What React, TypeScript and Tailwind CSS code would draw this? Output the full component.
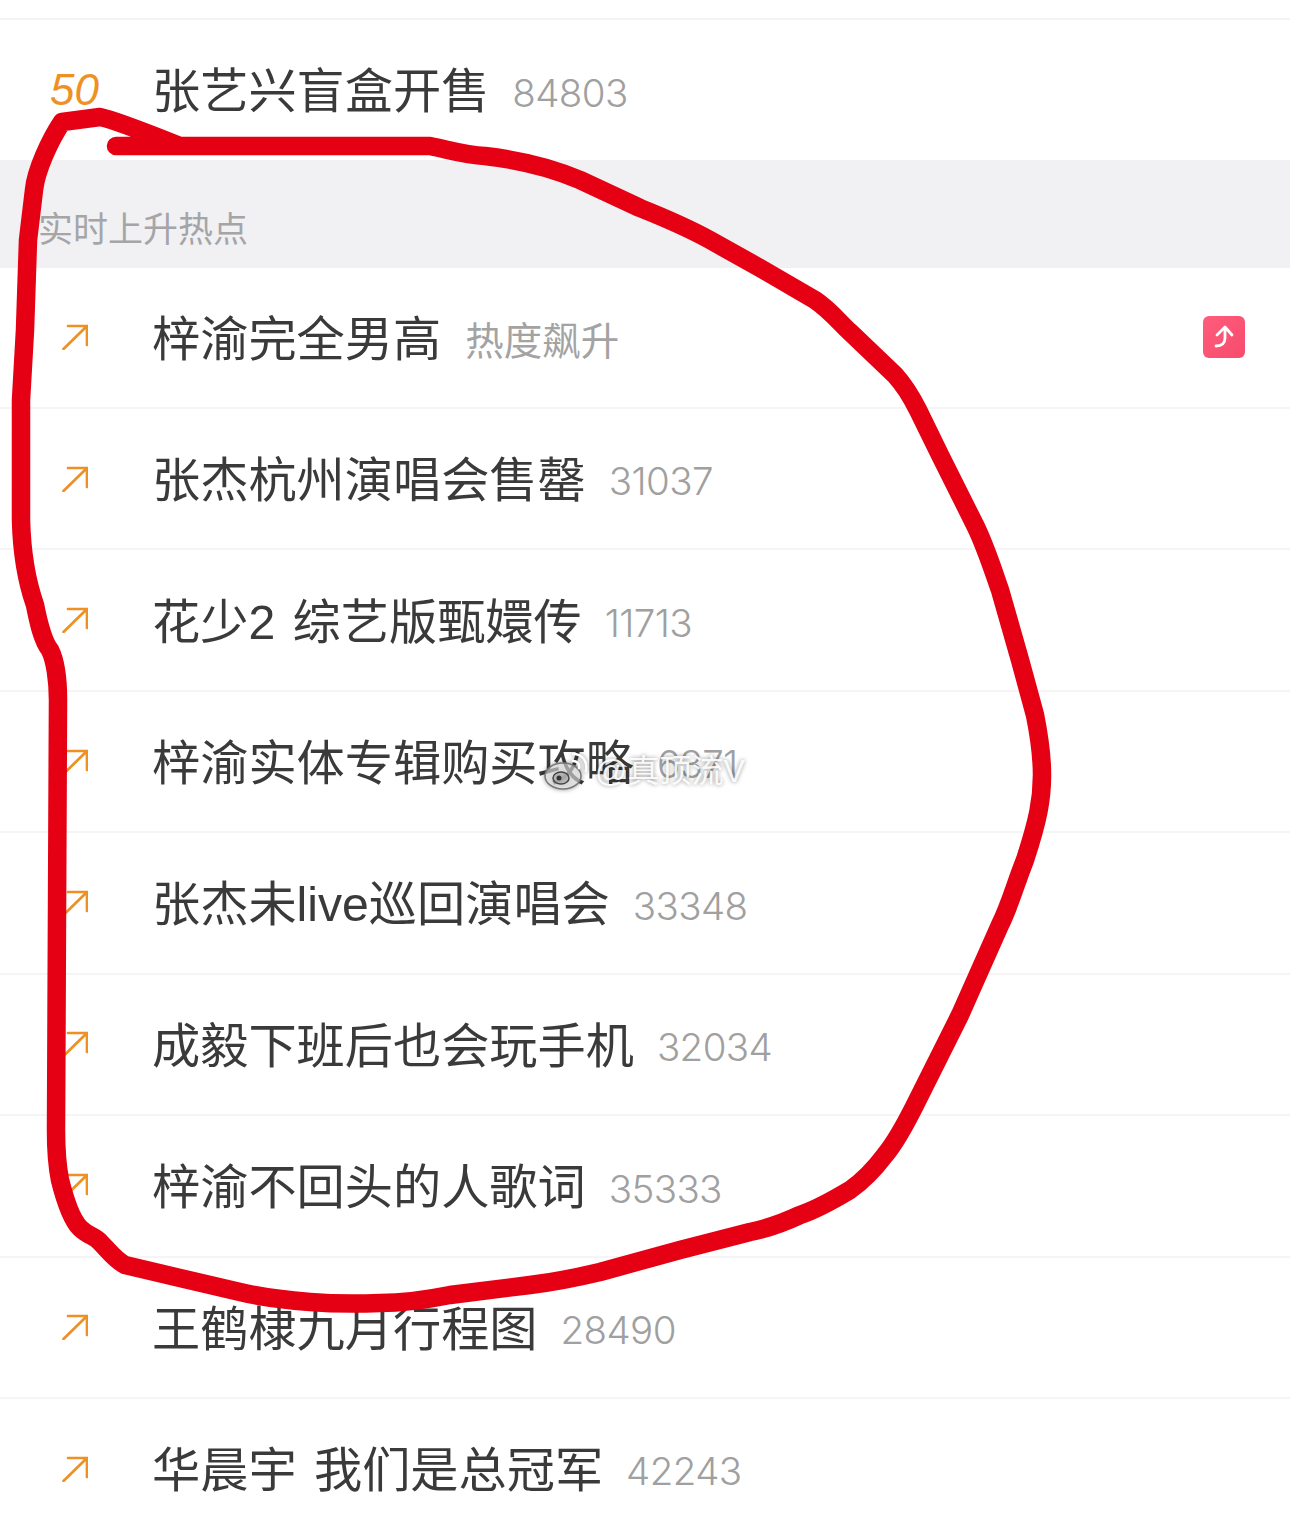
import React from "react";

const font = { fontFamily: '"Liberation Sans", "Noto Sans CJK SC", sans-serif' };

function Arrow() {
  return (
    <svg width="26" height="26" viewBox="0 0 26 26" fill="none" stroke="#ee9125" strokeWidth="2.7" strokeLinecap="round" strokeLinejoin="round">
      <path d="M1.5 25 L25 2 M6 2 H25 V21" />
    </svg>
  );
}

function Badge() {
  return (
    <div className="ml-auto mr-[45px] flex h-[42px] w-[42px] items-center justify-center rounded-[6px] bg-gradient-to-br from-[#ff5c7c] to-[#f74b6c]">
      <svg width="30" height="30" viewBox="0 0 30 30" fill="none" stroke="#fff" strokeWidth="2.8" strokeLinecap="round" strokeLinejoin="round">
        <path d="M7 24 C13 24 16 21 16 16 V6 M8 13 L16 5 L23 13" />
      </svg>
    </div>
  );
}

type Row = { title: string; sub: string; badge?: boolean; tag?: boolean };
const rows: Row[] = [
  { title: "梓渝完全男高", sub: "热度飙升", badge: true, tag: true },
  { title: "张杰杭州演唱会售罄", sub: "31037" },
  { title: "花少2 综艺版甄嬛传", sub: "11713" },
  { title: "梓渝实体专辑购买攻略", sub: "6371" },
  { title: "张杰未live巡回演唱会", sub: "33348" },
  { title: "成毅下班后也会玩手机", sub: "32034" },
  { title: "梓渝不回头的人歌词", sub: "35333" },
  { title: "王鹤棣九月行程图", sub: "28490" },
  { title: "华晨宇 我们是总冠军", sub: "42243" },
];

function Title({ title, sub, tag }: { title: string; sub: string; tag?: boolean }) {
  return (
    <>
      <span className="mt-[3px] whitespace-pre text-[48.2px] leading-none text-[#3a3a3a] [word-spacing:4px]">{title}</span>
      {tag ? (
        <span className="ml-[24px] mt-[9px] text-[38.5px] leading-none text-[#a3a3a3]">{sub}</span>
      ) : (
        <span className="ml-[23px] mt-[6px] text-[38.5px] font-light leading-none tracking-[-0.6px] text-[#a0a0a0]" style={{ fontFamily: 'Inter, sans-serif' }}>
          {sub}
        </span>
      )}
    </>
  );
}

const scribble =
  "M116 146 L430 146 C450 150 465 155 485 156 C520 160 550 167 580 180 L640 208 C670 220 690 229 710 240 L760 268 L815 300 C830 310 840 323 850 332 L895 375 C905 386 912 398 918 410 L940 455 L975 525 C985 545 993 570 1000 590 L1020 660 L1035 715 C1040 740 1042 755 1042 775 C1042 800 1038 820 1025 860 C1015 885 1010 905 1000 925 L960 1015 L915 1105 C905 1125 895 1143 885 1155 C870 1175 860 1183 850 1190 C830 1202 815 1210 800 1215 C785 1222 770 1228 750 1232 L680 1250 L600 1272 C575 1278 555 1282 530 1285 L450 1295 C425 1300 405 1303 380 1303 C355 1304 335 1304 310 1302 C285 1300 265 1298 240 1292 L180 1278 L125 1265 C115 1260 108 1250 100 1242 C95 1236 88 1236 80 1228 C72 1220 65 1200 60 1180 C57 1165 56 1150 56 1130 L58 700 C58 680 55 660 50 650 C42 640 38 620 35 605 C28 585 22 560 21 520 L21 400 L25 330 L28 240 L34 190 C36 170 50 140 62 122 L100 117 C115 120 145 132 180 146";

export default function App() {
  return (
    <div className="relative h-[1537px] w-[1290px] overflow-hidden bg-white" style={font}>
      <div className="h-[20px] border-b-2 border-[#f3f3f4]" />
      <div className="flex h-[140px] items-center">
        <div className="mr-[3px] flex w-[149px] justify-center">
          <span className="text-[44px] italic leading-none text-[#ee9125]">50</span>
        </div>
        <Title title="张艺兴盲盒开售" sub="84803" />
      </div>
      <div className="flex h-[107.6px] items-end bg-[#f1f1f3] pb-[21px] pl-[38px]">
        <span className="text-[35px] leading-none text-[#a5a5a8]">实时上升热点</span>
      </div>
      {rows.map((r) => (
        <div key={r.title} className="flex h-[141.43px] items-center border-b-2 border-[#f5f5f5] last:border-b-0">
          <div className="mr-[3px] flex w-[149px] justify-center">
            <Arrow />
          </div>
          <Title title={r.title} sub={r.sub} tag={r.tag} />
          {r.badge && <Badge />}
        </div>
      ))}

      <div className="absolute left-[543px] top-[750px] flex items-center gap-[4px] text-[32px] leading-none text-white/90 [text-shadow:0_0_4px_rgba(0,0,0,0.45)]">
        <svg width="48" height="42" viewBox="0 0 48 42" fill="none" stroke="#fff" strokeWidth="2.5" className="drop-shadow-[0_0_2px_rgba(0,0,0,0.5)]">
          <ellipse cx="20" cy="26" rx="18" ry="13" fill="rgba(255,255,255,0.55)" stroke="#777" strokeWidth="1.5" />
          <ellipse cx="18" cy="28" rx="8" ry="6" fill="rgba(170,170,170,0.7)" stroke="#444" strokeWidth="1.5" />
          <circle cx="16" cy="28" r="2.5" fill="#333" stroke="none" />
          <path d="M30 4 C39 4 45 11 43 21 M30 11 C34 11 37 14 36 18" strokeLinecap="round" />
        </svg>
        <span>@真顶流V</span>
      </div>

      <svg className="pointer-events-none absolute inset-0" width="1290" height="1537" viewBox="0 0 1290 1537" fill="none">
        <path d={scribble} stroke="#e60014" strokeWidth="18.5" strokeLinecap="round" strokeLinejoin="round" />
      </svg>
    </div>
  );
}
